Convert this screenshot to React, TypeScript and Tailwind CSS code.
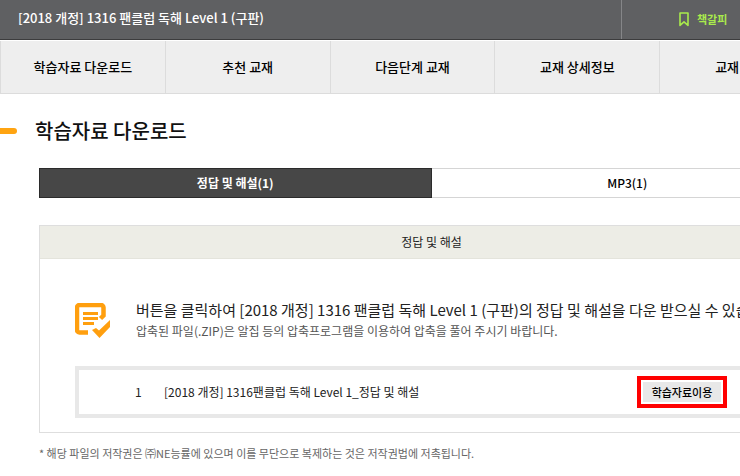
import clsx from "clsx";

const menuData = [
  "학습자료 다운로드",
  "추천 교재",
  "다음단계 교재",
  "교재 상세정보",
  "교재 Q&A",
];

const tabsData = ["정답 및 해설(1)", "MP3(1)"];

const filesData = [
  { id: 1, title: "[2018 개정] 1316팬클럽 독해 Level 1_정답 및 해설" },
];

const BookmarkIcon = () => (
  <svg width="10" height="15" viewBox="0 0 10 15" aria-hidden="true">
    <path
      d="M1 1h8v12.400L5 9.800 1 13.400z"
      fill="none"
      stroke="#a9ea4c"
      strokeWidth="1.6"
      strokeLinejoin="round"
    />
  </svg>
);

const DocumentCheckIcon = () => (
  <svg
    width="35"
    height="35"
    viewBox="0 0 35 35"
    className="shrink-0"
    aria-hidden="true"
  >
    <path
      d="M13 29.500H4.500a2.500 2.500 0 0 1-2.500-2.500V4.500a2.500 2.500 0 0 1 2.500-2.500H26a2.500 2.500 0 0 1 2.500 2.500V12.500l-3 3"
      fill="none"
      stroke="#ff9f0f"
      strokeWidth="4.500"
    />
    <path
      d="M8 10.500h15M8 15.500h15M8 20.500h11"
      fill="none"
      stroke="#ff9f0f"
      strokeWidth="2.800"
    />
    <path
      d="M17 27l4-2 3 2.500 11-10.500v7L24.500 35z"
      fill="#ff9f0f"
    />
  </svg>
);

const Header = () => {
  return (
    <header className="flex h-10 border-b border-[#3c3c3d] bg-[#5f6062] text-white">
      <h2 className="flex-1 pl-[18px] text-[13px] leading-9 font-medium">
        [2018 개정] 1316 팬클럽 독해 Level 1 (구판)
      </h2>
      <a
        href="#bookmark"
        className="flex w-[203px] items-center gap-2 border-l border-[#858688] pl-[57px] text-[11px] font-bold text-[#a9ea4c]"
      >
        <BookmarkIcon />
        책갈피
      </a>
    </header>
  );
};

const Menu = () => {
  return (
    <nav className="mt-px grid grid-cols-5 border-b border-[#dcdcdc] bg-[#eeeeee]">
      {menuData.map((item) => (
        <a
          key={item}
          href="#menu"
          className="border-l border-[#dcdcdc] text-center text-[13px] leading-[52px] font-medium text-black"
        >
          {item}
        </a>
      ))}
    </nav>
  );
};

const Tabs = () => {
  return (
    <div role="tablist" className="mt-[22px] grid grid-cols-2">
      {tabsData.map((item, index) => (
        <button
          key={item}
          role="tab"
          aria-selected={index === 0}
          className={clsx(
            "border text-xs leading-7",
            index === 0
              ? "border-[#2b2b2b] bg-[#474747] font-bold text-white"
              : "border-l-0 border-[#d5d5d5] bg-white font-medium text-black"
          )}
        >
          {item}
        </button>
      ))}
    </div>
  );
};

const Files = () => {
  return (
    <ul className="mt-[25px] border-4 border-r-0 border-[#e8e8e8]">
      {filesData.map((file) => (
        <li key={file.id} className="flex h-11 items-center text-xs text-[#222222]">
          <span className="w-[85px] pl-14">{file.id}</span>
          <span className="flex-1">{file.title}</span>
          <button className="mr-24 h-8 w-[90px] border-4 border-[#ff0000] bg-[#e8e8e8] text-[11px] font-medium text-black inset-ring-2 inset-ring-white">
            학습자료이용
          </button>
        </li>
      ))}
    </ul>
  );
};

const App = () => {
  return (
    <div className="overflow-hidden bg-white font-['Noto_Sans_CJK_KR',sans-serif]">
      <div className="min-w-[824px]">
        <Header />
        <Menu />
        <main>
          <div className="mt-[22px] flex items-center gap-[18px]">
            <span className="h-1.5 w-[17px] rounded-r-full bg-[#ffa411]" />
            <h1 className="text-xl leading-[30px] font-medium text-[#111111]">
              학습자료 다운로드
            </h1>
          </div>
          <div className="pl-[39px]">
            <Tabs />
            <section className="mt-[27px] border border-[#dedede]">
              <h3 className="border-b border-[#e4e4dc] bg-[#edede6] text-center text-xs leading-8 text-[#222222]">
                정답 및 해설
              </h3>
              <div className="pt-10 pb-3.5 pl-[35px]">
                <div className="flex items-center gap-[26px]">
                  <DocumentCheckIcon />
                  <div className="whitespace-nowrap">
                    <p className="text-[15px] leading-[22px] text-[#222222]">
                      버튼을 클릭하여 [2018 개정] 1316 팬클럽 독해 Level 1
                      (구판)의 정답 및 해설을 다운 받으실 수 있습니다.
                    </p>
                    <p className="text-xs leading-5 text-[#555555]">
                      압축된 파일(.ZIP)은 알집 등의 압축프로그램을 이용하여
                      압축을 풀어 주시기 바랍니다.
                    </p>
                  </div>
                </div>
                <Files />
              </div>
            </section>
            <p className="py-2.5 text-[11px] leading-5 text-[#666666]">
              * 해당 파일의 저작권은 ㈜NE능률에 있으며 이를 무단으로 복제하는
              것은 저작권법에 저촉됩니다.
            </p>
          </div>
        </main>
      </div>
    </div>
  );
};

export default App;
